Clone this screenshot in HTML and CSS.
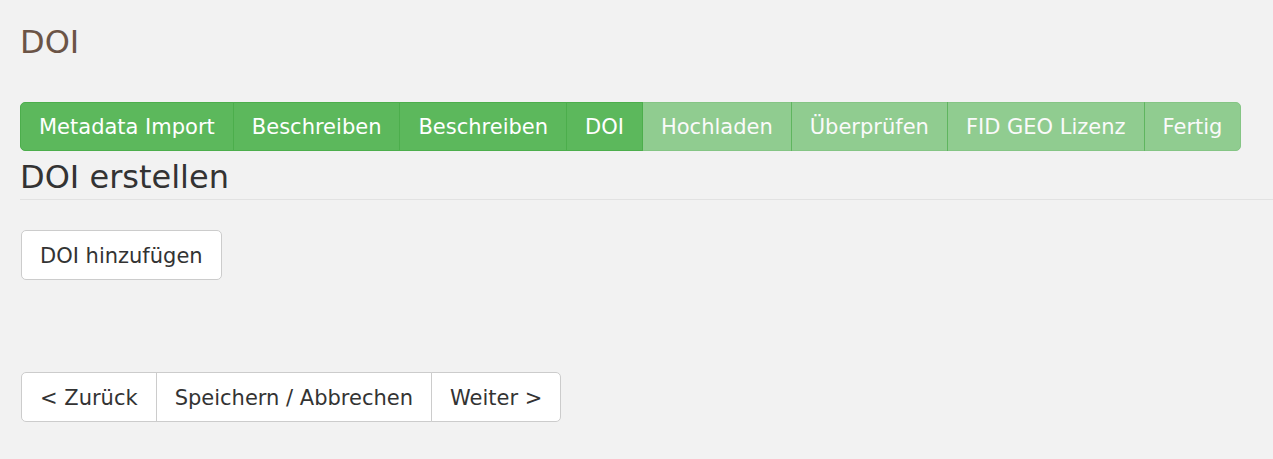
FILE: index.html
```html
<!DOCTYPE html>
<html lang="de">
<head>
<meta charset="utf-8">
<title>DOI</title>
<link rel="stylesheet" href="styles.css">
</head>
<body>
<div class="page">
  <h1 class="title">DOI</h1>
  <nav class="steps">
    <span class="step done">Metadata Import</span>
    <span class="step done">Beschreiben</span>
    <span class="step done">Beschreiben</span>
    <span class="step done">DOI</span>
    <span class="step todo">Hochladen</span>
    <span class="step todo">Überprüfen</span>
    <span class="step todo">FID GEO Lizenz</span>
    <span class="step todo">Fertig</span>
  </nav>
  <h2 class="section">DOI erstellen</h2>
  <div class="actions">
    <button class="btn">DOI hinzufügen</button>
  </div>
  <div class="btn-group">
    <button class="btn">&lt; Zurück</button>
    <button class="btn">Speichern / Abbrechen</button>
    <button class="btn">Weiter &gt;</button>
  </div>
</div>
</body>
</html>
```

FILE: styles.css
```css
html, body {
  margin: 0;
  padding: 0;
  background: #f2f2f2;
  font-family: "DejaVu Sans", Verdana, sans-serif;
  color: #333;
}

.page {
  padding: 24px 0 0 20px;
}

.title {
  margin: 0;
  font-size: 32px;
  font-weight: normal;
  line-height: 36px;
  color: #6b5446;
}

.steps {
  display: flex;
  width: 1221px;
  margin-top: 42px;
}

.step {
  font-size: 21px;
  line-height: 27px;
  padding: 11px 18px 9px;
  color: #fff;
  background: #5cb85c;
  border: 1px solid #4cae4c;
  white-space: nowrap;
}

.step + .step {
  margin-left: -1px;
}

.step:first-child {
  border-radius: 5px 0 0 5px;
}

.step:last-child {
  border-radius: 0 5px 5px 0;
  flex: 1;
}

.step.todo {
  opacity: 0.65;
}

.section {
  margin: 8px 0 0;
  padding-bottom: 4px;
  font-size: 32px;
  font-weight: normal;
  line-height: 36px;
  color: #333;
  border-bottom: 1px solid #e2e2e2;
}

.actions {
  margin-top: 30px;
  margin-left: 1px;
}

.btn {
  font-family: inherit;
  font-size: 21px;
  line-height: 28px;
  padding: 11px 18px 9px;
  color: #333;
  background: #fff;
  border: 1px solid #ccc;
  border-radius: 5px;
  margin: 0;
  cursor: pointer;
}

.btn-group {
  display: flex;
  margin-top: 92px;
  margin-left: 1px;
}

.btn-group .btn {
  border-radius: 0;
}

.btn-group .btn + .btn {
  margin-left: -1px;
}

.btn-group .btn:first-child {
  border-radius: 5px 0 0 5px;
}

.btn-group .btn:last-child {
  border-radius: 0 5px 5px 0;
}
```
